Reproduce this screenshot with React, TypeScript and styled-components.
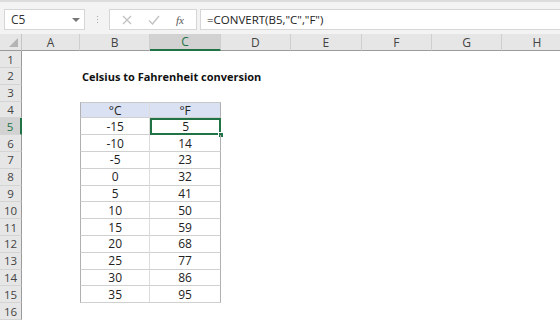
import React from 'react'
import styled, { createGlobalStyle, css } from 'styled-components'

const GlobalStyle = createGlobalStyle`
  html, body {
    margin: 0;
    padding: 0;
    background: #ffffff;
    width: 560px;
    height: 320px;
    overflow: hidden;
  }
  * { box-sizing: border-box; }
`

const GREEN = '#217346'
const COL_W = 70.4
const ROW_H = 16.8
const columns = ['A', 'B', 'C', 'D', 'E', 'F', 'G', 'H']
const data: [number, number][] = [
  [-15, 5], [-10, 14], [-5, 23], [0, 32], [5, 41], [10, 50],
  [15, 59], [20, 68], [25, 77], [30, 86], [35, 95],
]

const Window = styled.div`
  width: 560px;
  height: 320px;
  display: flex;
  flex-direction: column;
  font-family: 'Open Sans', 'Liberation Sans', sans-serif;
  color: #222;
`

const FormulaBar = styled.div`
  height: 36px;
  display: flex;
  align-items: flex-start;
  padding: 7px 0 0 4px;
  background: #f3f3f3;
  border-top: 2px solid #dcdcdc;
`

const NameBox = styled.div`
  width: 81px;
  height: 21px;
  display: flex;
  align-items: center;
  justify-content: space-between;
  padding: 0 4px 0 6px;
  background: #fff;
  border: 1px solid #d6d6d6;
  font-size: 12px;
  color: #333;
`

const DropArrow = styled.span`
  width: 0;
  height: 0;
  border-left: 4px solid transparent;
  border-right: 4px solid transparent;
  border-top: 4px solid #777;
`

const Grip = styled.div`
  width: 24px;
  height: 21px;
  display: flex;
  flex-direction: column;
  align-items: center;
  justify-content: center;
  gap: 2px;
  span {
    width: 1px;
    height: 1px;
    background: #aaa;
  }
`

const FxButtons = styled.div`
  width: 88px;
  height: 21px;
  display: flex;
  align-items: center;
  justify-content: space-around;
  padding: 0 4px;
  background: #fff;
  border: 1px solid #d6d6d6;
`

const FxLabel = styled.span`
  font-family: 'Liberation Serif', serif;
  font-style: italic;
  font-size: 11px;
  color: #555;
`

const FormulaInput = styled.div`
  flex: 1;
  height: 21px;
  margin-left: 3px;
  display: flex;
  align-items: center;
  padding-left: 6px;
  background: #fff;
  border: 1px solid #d6d6d6;
  border-right: none;
  font-size: 11.5px;
  color: #222;
`

const Sheet = styled.div`
  display: grid;
  grid-template-columns: 22px 58px repeat(7, ${COL_W}px);
  grid-template-rows: 17px repeat(16, ${ROW_H}px);
  background: #fff;
`

const headerBase = css`
  background: #e6e6e6;
  color: #444;
  font-size: 12px;
  display: flex;
  align-items: center;
  justify-content: center;
`

const Corner = styled.div`
  ${headerBase};
  position: relative;
  border-right: 1px solid #c6c6c6;
  border-bottom: 1px solid #9b9b9b;
  &::after {
    content: '';
    position: absolute;
    right: 3px;
    bottom: 3px;
    border-left: 9px solid transparent;
    border-bottom: 9px solid #b4b4b4;
  }
`

const ColHead = styled.div<{ $active?: boolean }>`
  ${headerBase};
  border-right: 1px solid #cfcfcf;
  border-bottom: 1px solid #9b9b9b;
  ${(p) => p.$active && css`
    background: #d2d2d2;
    color: ${GREEN};
    border-bottom: 2px solid ${GREEN};
  `}
`

const RowHead = styled.div<{ $active?: boolean }>`
  ${headerBase};
  font-size: 11.5px;
  border-bottom: 1px solid #d4d4d4;
  border-right: 1px solid #9b9b9b;
  ${(p) => p.$active && css`
    background: #d2d2d2;
    color: ${GREEN};
    border-right: 2px solid ${GREEN};
  `}
`

const Cell = styled.div<{ $table?: boolean; $first?: boolean; $top?: boolean; $head?: boolean; $selected?: boolean }>`
  position: relative;
  font-size: 12px;
  color: #222;
  display: flex;
  align-items: center;
  justify-content: center;
  white-space: nowrap;
  ${(p) => p.$table && css`
    border-bottom: 1px solid #d0d0d0;
    border-right: 1px solid ${p.$first ? '#dcdcdc' : '#b0b0b0'};
  `}
  ${(p) => p.$table && p.$first && css`border-left: 1px solid #b0b0b0;`}
  ${(p) => p.$top && css`border-top: 1px solid #c8c8c8;`}
  ${(p) => p.$head && css`background: #d9e1f2;`}
  ${(p) => p.$selected && css`
    border: 2px solid ${GREEN};
  `}
`

const Title = styled.span`
  position: absolute;
  left: 2px;
  font-weight: 700;
  font-size: 11px;
  color: #111;
`

const Handle = styled.span`
  position: absolute;
  right: -5px;
  bottom: -5px;
  width: 6px;
  height: 6px;
  background: ${GREEN};
  border: 1px solid #fff;
`

function renderRow(r: number) {
  const cells: React.ReactNode[] = []
  cells.push(
    <RowHead key="h" $active={r === 5}>
      {r}
    </RowHead>,
  )
  columns.forEach((c) => {
    const key = c + r
    const inTable = (c === 'B' || c === 'C') && r >= 4 && r <= 15
    if (r === 2 && c === 'B') {
      cells.push(
        <Cell key={key}>
          <Title>Celsius to Fahrenheit conversion</Title>
        </Cell>,
      )
      return
    }
    if (!inTable) {
      cells.push(<Cell key={key} />)
      return
    }
    const first = c === 'B'
    let text: React.ReactNode = ''
    if (r === 4) text = first ? '°C' : '°F'
    else text = data[r - 5][first ? 0 : 1]
    const selected = c === 'C' && r === 5
    cells.push(
      <Cell key={key} $table $first={first} $top={r === 4} $head={r === 4} $selected={selected}>
        {text}
        {selected && <Handle />}
      </Cell>,
    )
  })
  return cells
}

export default function App() {
  return (
    <Window>
      <GlobalStyle />
      <FormulaBar>
        <NameBox>
          C5
          <DropArrow />
        </NameBox>
        <Grip>
          <span />
          <span />
          <span />
        </Grip>
        <FxButtons>
          <svg width="10" height="10" viewBox="0 0 10 10">
            <path d="M1 1L9 9M9 1L1 9" stroke="#c2c2c2" strokeWidth="1.3" />
          </svg>
          <svg width="12" height="10" viewBox="0 0 12 10">
            <path d="M1 5.5L4.5 9L11 1" stroke="#c2c2c2" strokeWidth="1.4" fill="none" />
          </svg>
          <FxLabel>fx</FxLabel>
        </FxButtons>
        <FormulaInput>=CONVERT(B5,"C","F")</FormulaInput>
      </FormulaBar>
      <Sheet>
        <Corner />
        {columns.map((c) => (
          <ColHead key={c} $active={c === 'C'}>
            {c}
          </ColHead>
        ))}
        {Array.from({ length: 16 }, (_, i) => renderRow(i + 1))}
      </Sheet>
    </Window>
  )
}
